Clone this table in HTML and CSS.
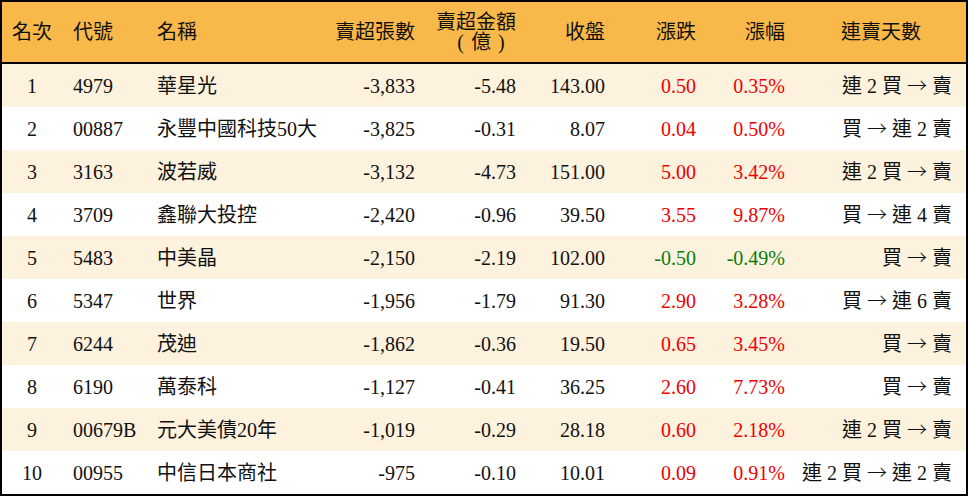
FILE: index.html
```html
<!DOCTYPE html>
<html lang="zh-Hant">
<head>
<meta charset="utf-8">
<title>賣超排行</title>
<link rel="stylesheet" href="styles.css">
</head>
<body>
<div class="table">
  <div class="row head">
    <div class="c center">名次</div>
    <div class="c left">代號</div>
    <div class="c left">名稱</div>
    <div class="c right">賣超張數</div>
    <div class="c right"><span class="two">賣超金額<br><span class="unit">( 億 )</span></span></div>
    <div class="c right">收盤</div>
    <div class="c right">漲跌</div>
    <div class="c right">漲幅</div>
    <div class="c center">連賣天數</div>
  </div>
  <div class="row odd">
    <div class="c center">1</div><div class="c left">4979</div><div class="c left">華星光</div>
    <div class="c right">-3,833</div><div class="c right">-5.48</div><div class="c right">143.00</div>
    <div class="c right up">0.50</div><div class="c right up">0.35%</div><div class="c right last">連 2 買 <span class="arr">→</span> 賣</div>
  </div>
  <div class="row">
    <div class="c center">2</div><div class="c left">00887</div><div class="c left">永豐中國科技50大</div>
    <div class="c right">-3,825</div><div class="c right">-0.31</div><div class="c right">8.07</div>
    <div class="c right up">0.04</div><div class="c right up">0.50%</div><div class="c right last">買 <span class="arr">→</span> 連 2 賣</div>
  </div>
  <div class="row odd">
    <div class="c center">3</div><div class="c left">3163</div><div class="c left">波若威</div>
    <div class="c right">-3,132</div><div class="c right">-4.73</div><div class="c right">151.00</div>
    <div class="c right up">5.00</div><div class="c right up">3.42%</div><div class="c right last">連 2 買 <span class="arr">→</span> 賣</div>
  </div>
  <div class="row">
    <div class="c center">4</div><div class="c left">3709</div><div class="c left">鑫聯大投控</div>
    <div class="c right">-2,420</div><div class="c right">-0.96</div><div class="c right">39.50</div>
    <div class="c right up">3.55</div><div class="c right up">9.87%</div><div class="c right last">買 <span class="arr">→</span> 連 4 賣</div>
  </div>
  <div class="row odd">
    <div class="c center">5</div><div class="c left">5483</div><div class="c left">中美晶</div>
    <div class="c right">-2,150</div><div class="c right">-2.19</div><div class="c right">102.00</div>
    <div class="c right down">-0.50</div><div class="c right down">-0.49%</div><div class="c right last">買 <span class="arr">→</span> 賣</div>
  </div>
  <div class="row">
    <div class="c center">6</div><div class="c left">5347</div><div class="c left">世界</div>
    <div class="c right">-1,956</div><div class="c right">-1.79</div><div class="c right">91.30</div>
    <div class="c right up">2.90</div><div class="c right up">3.28%</div><div class="c right last">買 <span class="arr">→</span> 連 6 賣</div>
  </div>
  <div class="row odd">
    <div class="c center">7</div><div class="c left">6244</div><div class="c left">茂迪</div>
    <div class="c right">-1,862</div><div class="c right">-0.36</div><div class="c right">19.50</div>
    <div class="c right up">0.65</div><div class="c right up">3.45%</div><div class="c right last">買 <span class="arr">→</span> 賣</div>
  </div>
  <div class="row">
    <div class="c center">8</div><div class="c left">6190</div><div class="c left">萬泰科</div>
    <div class="c right">-1,127</div><div class="c right">-0.41</div><div class="c right">36.25</div>
    <div class="c right up">2.60</div><div class="c right up">7.73%</div><div class="c right last">買 <span class="arr">→</span> 賣</div>
  </div>
  <div class="row odd">
    <div class="c center">9</div><div class="c left">00679B</div><div class="c left">元大美債20年</div>
    <div class="c right">-1,019</div><div class="c right">-0.29</div><div class="c right">28.18</div>
    <div class="c right up">0.60</div><div class="c right up">2.18%</div><div class="c right last">連 2 買 <span class="arr">→</span> 賣</div>
  </div>
  <div class="row">
    <div class="c center">10</div><div class="c left">00955</div><div class="c left">中信日本商社</div>
    <div class="c right">-975</div><div class="c right">-0.10</div><div class="c right">10.01</div>
    <div class="c right up">0.09</div><div class="c right up">0.91%</div><div class="c right last">連 2 買 <span class="arr">→</span> 連 2 賣</div>
  </div>
</div>
</body>
</html>
```
FILE: styles.css
```css
* { box-sizing: border-box; }
html, body { margin: 0; padding: 0; background: #ffffff; }
body {
  font-family: "Liberation Serif", "Noto Sans CJK TC", serif;
  font-size: 20px;
  color: #111111;
}
.table {
  width: 968px;
  height: 496px;
  border: 2px solid #000000;
  display: flex;
  flex-direction: column;
  background: #ffffff;
}
.row {
  display: grid;
  grid-template-columns: 60px 84px 174px 106px 101px 89px 91px 89px 170px;
  height: 43px;
  align-items: center;
  line-height: 22px;
}
.row.head {
  height: 62px;
  background: #f9b84a;
  border-bottom: 2px solid #000000;
  line-height: 20px;
}
.row.odd { background: #fdf2de; }
.c { white-space: nowrap; }
.center { text-align: center; }
.left { text-align: left; padding-left: 11px; }
.right { text-align: right; padding-right: 11px; }
.last { padding-right: 14px; }
.two { display: inline-block; text-align: center; }
.unit { display: inline-block; padding-left: 10px; word-spacing: 2px; }
.arr { font-family: "Noto Sans CJK TC", sans-serif; font-weight: 300; }
.up { color: #ee0000; }
.down { color: #0a7d0a; }
```
